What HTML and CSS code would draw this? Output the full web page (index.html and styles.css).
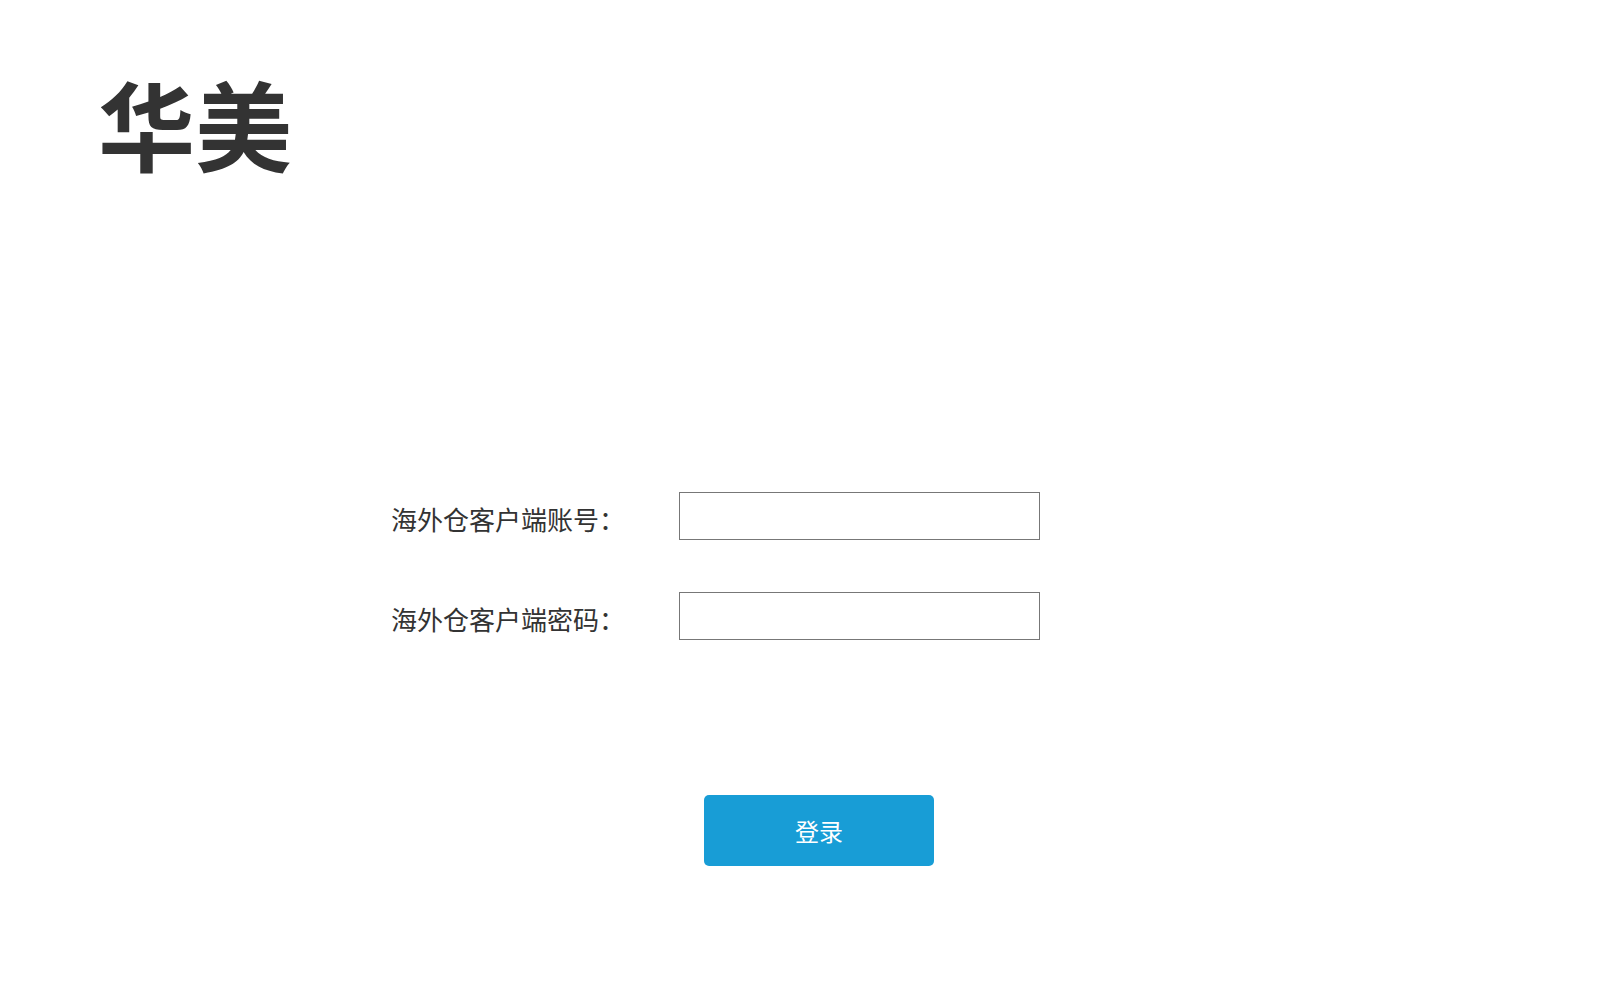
FILE: index.html
```html
<!DOCTYPE html>
<html lang="zh-CN">
  <head>
    <meta charset="UTF-8" />
    <meta name="viewport" content="width=device-width, initial-scale=1.0" />
    <title>华美 登录</title>
    <link rel="stylesheet" href="styles.css">
  </head>
  <body>
    <div class="container">
      <div class="header">
        <h1 class="logo">华美</h1>
      </div>
      <form class="login">
        <div class="row">
          <label for="account">海外仓客户端账号：</label>
          <input id="account" type="text" />
        </div>
        <div class="row">
          <label for="password">海外仓客户端密码：</label>
          <input id="password" type="password" />
        </div>
        <div class="actions">
          <button type="button" class="btn">登录</button>
        </div>
      </form>
    </div>
  </body>
</html>
```

FILE: styles.css
```css
* {
  margin: 0;
  padding: 0;
  box-sizing: border-box;
}
html,
body {
  width: 100%;
  height: 100%;
  background-color: #fff;
  color: #333;
  font-family: "Noto Sans CJK SC", "Noto Sans", sans-serif;
}
.container {
  width: 100%;
  min-height: 100vh;
}
/* 顶部标志 */
.header {
  padding: 62px 0 0 98px;
  height: 300px;
}
.logo {
  font-size: 97px;
  font-weight: 700;
  line-height: 120px;
  color: #333;
}
/* 登录表单 */
.login {
  padding: 192px 0 0 391px;
}
.row {
  display: grid;
  grid-template-columns: 288px 361px;
  align-items: center;
  margin-bottom: 52px;
}
.row label {
  padding-top: 4px;
  font-size: 26px;
  font-weight: 400;
  color: #333;
}
.row input {
  width: 361px;
  height: 48px;
  border: 1px solid #777;
  outline: none;
  padding: 0 10px;
  font-size: 18px;
}
.actions {
  padding: 103px 0 0 313px;
}
.btn {
  width: 230px;
  height: 71px;
  border: none;
  border-radius: 5px;
  background-color: #189dd6;
  color: #fff;
  font-family: "Noto Sans CJK SC", sans-serif;
  font-size: 24px;
  cursor: pointer;
}
```
